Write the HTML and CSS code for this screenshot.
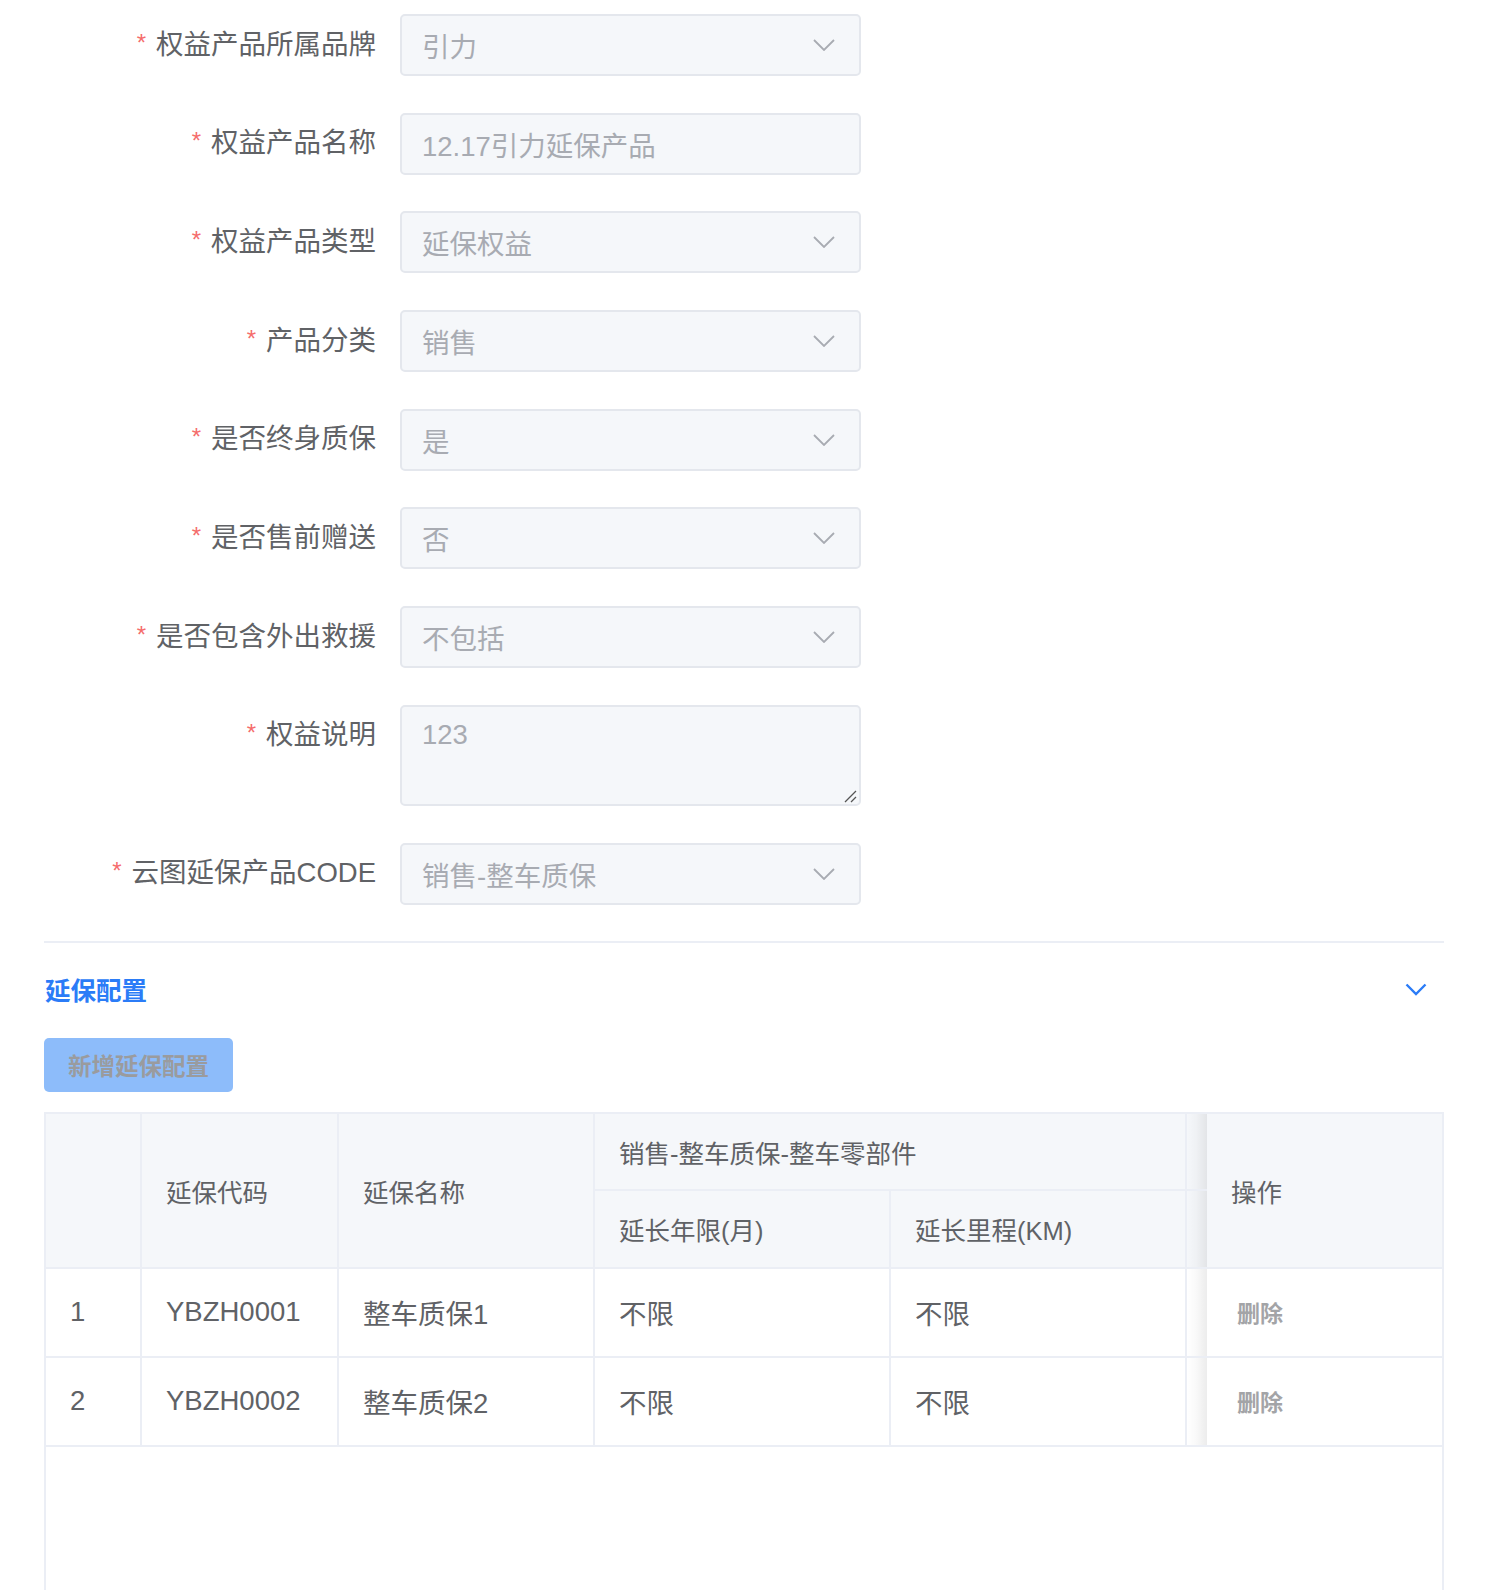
FILE: index.html
```html
<!DOCTYPE html>
<html lang="zh-CN">
<head>
<meta charset="utf-8">
<title>权益产品</title>
<link rel="stylesheet" href="styles.css">
</head>
<body>
<div class="page">
  <form class="form">
    <div class="row">
      <label class="label"><span class="req">*</span>权益产品所属品牌</label>
      <div class="control select"><span class="val">引力</span>
        <svg class="arrow" width="22" height="12" viewBox="0 0 22 12"><path d="M1 1 L11 11 L21 1" fill="none" stroke="#a8abb2" stroke-width="1.8"/></svg></div>
    </div>
    <div class="row">
      <label class="label"><span class="req">*</span>权益产品名称</label>
      <div class="control"><span class="val">12.17引力延保产品</span></div>
    </div>
    <div class="row">
      <label class="label"><span class="req">*</span>权益产品类型</label>
      <div class="control select"><span class="val">延保权益</span>
        <svg class="arrow" width="22" height="12" viewBox="0 0 22 12"><path d="M1 1 L11 11 L21 1" fill="none" stroke="#a8abb2" stroke-width="1.8"/></svg></div>
    </div>
    <div class="row">
      <label class="label"><span class="req">*</span>产品分类</label>
      <div class="control select"><span class="val">销售</span>
        <svg class="arrow" width="22" height="12" viewBox="0 0 22 12"><path d="M1 1 L11 11 L21 1" fill="none" stroke="#a8abb2" stroke-width="1.8"/></svg></div>
    </div>
    <div class="row">
      <label class="label"><span class="req">*</span>是否终身质保</label>
      <div class="control select"><span class="val">是</span>
        <svg class="arrow" width="22" height="12" viewBox="0 0 22 12"><path d="M1 1 L11 11 L21 1" fill="none" stroke="#a8abb2" stroke-width="1.8"/></svg></div>
    </div>
    <div class="row">
      <label class="label"><span class="req">*</span>是否售前赠送</label>
      <div class="control select"><span class="val">否</span>
        <svg class="arrow" width="22" height="12" viewBox="0 0 22 12"><path d="M1 1 L11 11 L21 1" fill="none" stroke="#a8abb2" stroke-width="1.8"/></svg></div>
    </div>
    <div class="row">
      <label class="label"><span class="req">*</span>是否包含外出救援</label>
      <div class="control select"><span class="val">不包括</span>
        <svg class="arrow" width="22" height="12" viewBox="0 0 22 12"><path d="M1 1 L11 11 L21 1" fill="none" stroke="#a8abb2" stroke-width="1.8"/></svg></div>
    </div>
    <div class="row row-top">
      <label class="label"><span class="req">*</span>权益说明</label>
      <div class="control textarea"><span class="val">123</span>
        <svg class="grip" width="14" height="14" viewBox="0 0 14 14"><path d="M13 2 L2 13 M13 8 L8 13" fill="none" stroke="#555" stroke-width="1.3"/></svg></div>
    </div>
    <div class="row">
      <label class="label"><span class="req">*</span>云图延保产品CODE</label>
      <div class="control select"><span class="val">销售-整车质保</span>
        <svg class="arrow" width="22" height="12" viewBox="0 0 22 12"><path d="M1 1 L11 11 L21 1" fill="none" stroke="#a8abb2" stroke-width="1.8"/></svg></div>
    </div>
  </form>

  <div class="divider"></div>

  <div class="section-head">
    <span class="section-title">延保配置</span>
    <svg class="section-arrow" width="22" height="13" viewBox="0 0 22 13"><path d="M1.5 1.5 L11 11 L20.5 1.5" fill="none" stroke="#2b7cf7" stroke-width="2.4"/></svg>
  </div>

  <button type="button" class="btn-add">新增延保配置</button>

  <div class="table-wrap">
    <table class="grid">
      <colgroup>
        <col class="c-idx"><col class="c-code"><col class="c-name"><col class="c-year"><col class="c-km"><col class="c-strip"><col class="c-op">
      </colgroup>
      <thead>
        <tr class="h1">
          <th rowspan="2"></th>
          <th rowspan="2">延保代码</th>
          <th rowspan="2">延保名称</th>
          <th colspan="2">销售-整车质保-整车零部件</th>
          <th class="strip"></th>
          <th rowspan="2" class="op">操作</th>
        </tr>
        <tr class="h2">
          <th>延长年限(月)</th>
          <th>延长里程(KM)</th>
          <th class="strip"></th>
        </tr>
      </thead>
      <tbody>
        <tr>
          <td>1</td><td>YBZH0001</td><td>整车质保1</td><td>不限</td><td>不限</td><td class="strip"></td><td class="op"><span class="del">删除</span></td>
        </tr>
        <tr>
          <td>2</td><td>YBZH0002</td><td>整车质保2</td><td>不限</td><td>不限</td><td class="strip"></td><td class="op"><span class="del">删除</span></td>
        </tr>
      </tbody>
    </table>
  </div>
</div>
</body>
</html>
```

FILE: styles.css
```css
* { box-sizing: border-box; }

html, body {
  margin: 0;
  padding: 0;
  background: #ffffff;
}

body {
  font-family: "Liberation Sans", "Noto Sans CJK SC", sans-serif;
  color: #606266;
}

.page {
  padding: 14px 48px 0 44px;
}

/* ---------- form ---------- */
.form {
  display: flex;
  flex-direction: column;
  gap: 36.7px;
}

.row {
  display: flex;
  align-items: center;
}

.row-top {
  align-items: flex-start;
}

.label {
  width: 356px;
  padding-right: 24px;
  text-align: right;
  font-size: 27.5px;
  line-height: 40px;
  color: #606266;
  white-space: nowrap;
}

.row-top .label {
  padding-top: 10px;
}

.req {
  color: #f56c6c;
  font-family: "Liberation Sans", sans-serif;
  font-size: 24px;
  margin-right: 10px;
  position: relative;
  top: -3px;
}

.control {
  width: 461px;
  height: 62px;
  background: #f5f7fa;
  border: 2px solid #e4e7ed;
  border-radius: 5px;
  display: flex;
  align-items: center;
  padding: 0 24px 0 20px;
  font-size: 27.5px;
  color: #a8abb2;
}

.select {
  justify-content: space-between;
}

.val {
  white-space: nowrap;
}

.arrow {
  display: block;
}

.textarea {
  height: 101px;
  flex-direction: column;
  align-items: flex-start;
  padding: 12px 2px 1px 20px;
  line-height: 32px;
}

.grip {
  margin-top: auto;
  align-self: flex-end;
  display: block;
}

/* ---------- section ---------- */
.divider {
  margin-top: 36px;
  height: 2px;
  background: #ebeef5;
}

.section-head {
  margin-top: 26px;
  height: 40px;
  display: flex;
  align-items: center;
  justify-content: space-between;
  padding-right: 17px;
}

.section-title {
  font-size: 25.5px;
  font-weight: 700;
  color: #2b7cf7;
  padding-left: 1px;
}

.section-arrow {
  display: block;
  margin-top: 2px;
}

.btn-add {
  display: block;
  margin-top: 29px;
  width: 189px;
  height: 54px;
  border: none;
  border-radius: 5px;
  background: #8dbcfa;
  color: #9a9b9e;
  font-family: "Liberation Sans", "Noto Sans CJK SC", sans-serif;
  font-size: 23.5px;
  font-weight: 700;
  padding: 0;
}

/* ---------- table ---------- */
.table-wrap {
  margin-top: 20px;
  border: 2px solid #ebeef5;
  border-bottom: none;
  height: 520px;
}

.grid {
  width: 100%;
  table-layout: fixed;
  border-collapse: separate;
  border-spacing: 0;
}

.c-idx { width: 96px; }
.c-code { width: 197px; }
.c-name { width: 256px; }
.c-year { width: 296px; }
.c-km { width: 296px; }
.c-strip { width: 20px; }
.c-op { width: 235px; }

.grid th,
.grid td {
  border-right: 2px solid #ebeef5;
  border-bottom: 2px solid #ebeef5;
  padding: 0 0 0 24px;
  text-align: left;
  vertical-align: middle;
  white-space: nowrap;
  overflow: hidden;
}

.grid th {
  background: #f5f7fa;
  font-weight: 400;
  font-size: 25.5px;
  color: #606266;
}

.grid td {
  background: #ffffff;
  font-size: 27.5px;
  color: #606266;
}

.grid .h1 { height: 77px; }
.grid .h2 { height: 78px; }
.grid tbody tr { height: 89px; }

.grid th.strip,
.grid td.strip {
  padding: 0;
  border-right: none;
  background-image: linear-gradient(to right, rgba(0, 0, 0, 0) 0%, rgba(0, 0, 0, 0.025) 45%, rgba(0, 0, 0, 0.075) 100%);
}

.grid .op {
  border-right: none;
}

.del {
  margin-left: 6px;
  font-size: 23px;
  font-weight: 700;
  color: #a3a4a7;
}
```
